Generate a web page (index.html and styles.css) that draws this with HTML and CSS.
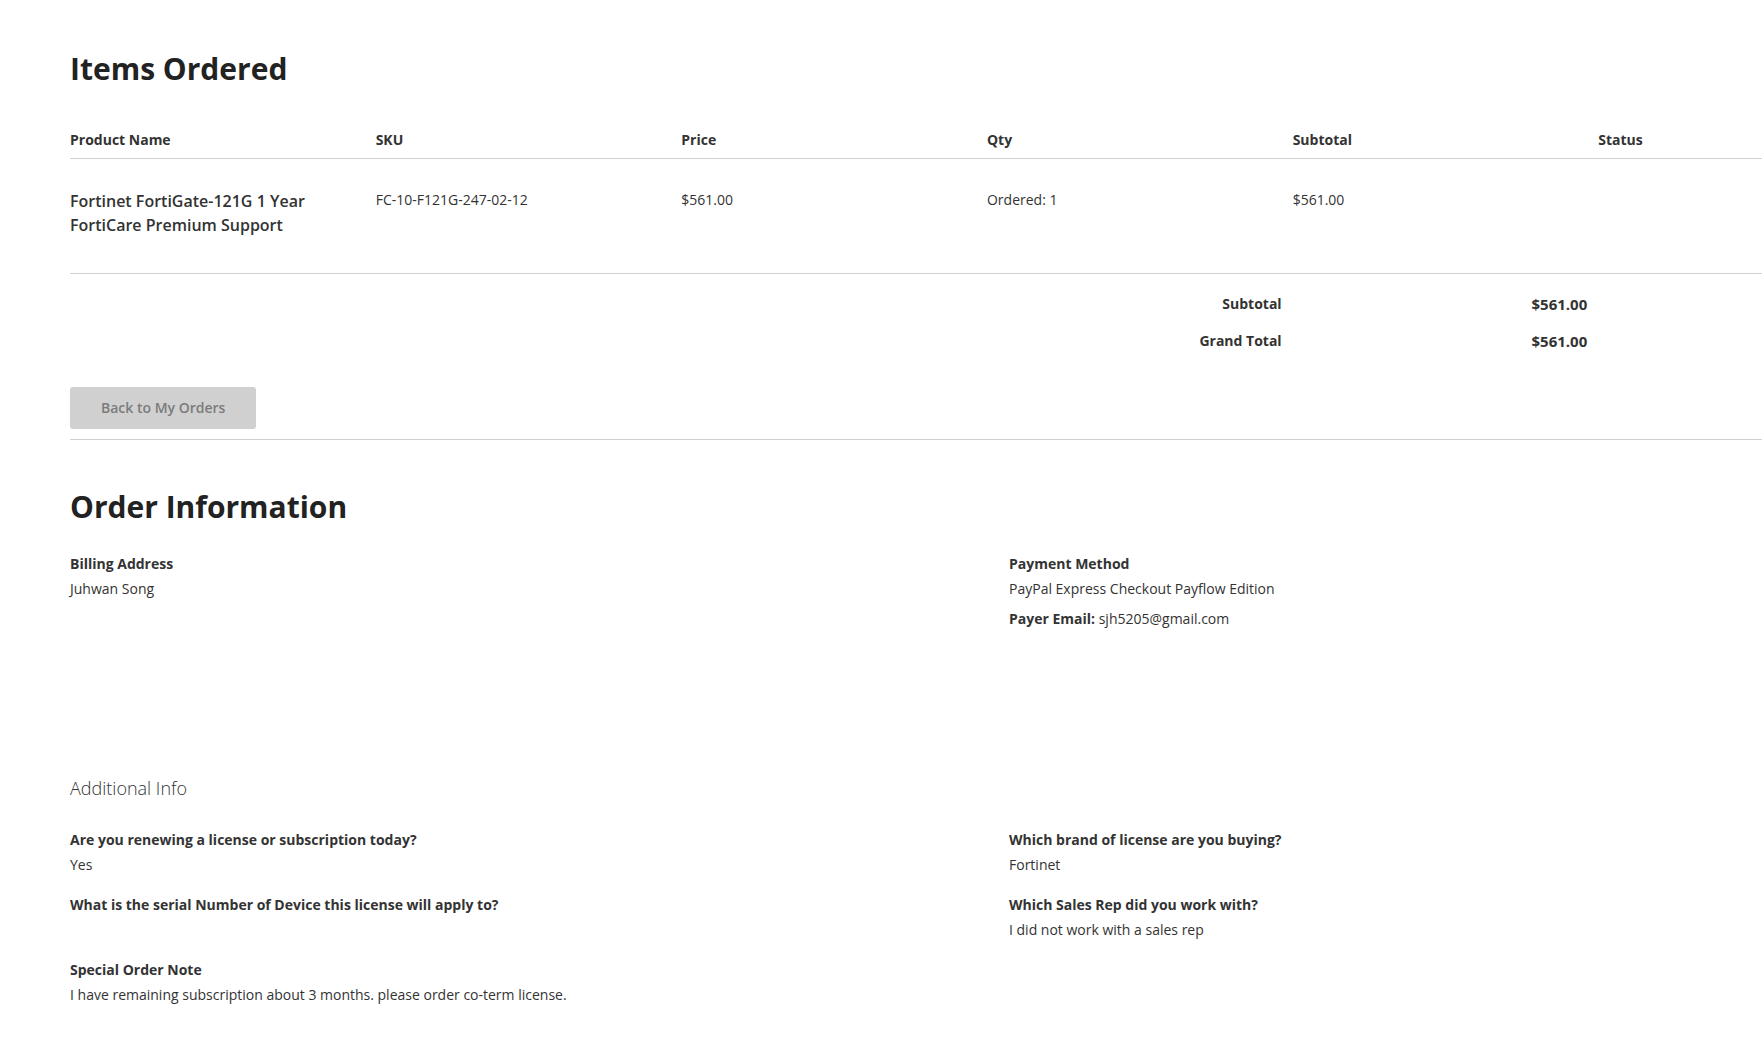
FILE: index.html
```html
<!doctype html>
<html>
	<head>
		<meta charset="utf-8"/>
		<meta name="viewport" content="width=device-width, initial-scale=1" />
		<title>Order #000012345</title>
		<link rel="stylesheet" href="styles.css">
	</head>
	<body>
		<main class="page">
			<section class="items-ordered">
				<h2 class="block-title">Items Ordered</h2>
				<table class="items-table">
					<colgroup>
						<col class="col"><col class="col"><col class="col"><col class="col"><col class="col"><col class="col">
					</colgroup>
					<thead>
						<tr>
							<th>Product Name</th>
							<th>SKU</th>
							<th>Price</th>
							<th>Qty</th>
							<th>Subtotal</th>
							<th>Status</th>
						</tr>
					</thead>
					<tbody>
						<tr>
							<td class="product-name">Fortinet FortiGate-121G 1 Year FortiCare Premium Support</td>
							<td>FC-10-F121G-247-02-12</td>
							<td>$561.00</td>
							<td>Ordered: 1</td>
							<td>$561.00</td>
							<td></td>
						</tr>
					</tbody>
					<tfoot>
						<tr class="first">
							<th colspan="4" class="mark">Subtotal</th>
							<td class="amount">$561.00</td>
							<td></td>
						</tr>
						<tr>
							<th colspan="4" class="mark">Grand Total</th>
							<td class="amount">$561.00</td>
							<td></td>
						</tr>
					</tfoot>
				</table>

				<div class="actions">
					<a class="back-btn" href="#">Back to My Orders</a>
				</div>
			</section>

			<section class="order-info">
				<h2 class="block-title">Order Information</h2>
				<div class="two-col">
					<div class="box">
						<div class="box-title">Billing Address</div>
						<div class="box-value">Juhwan Song</div>
					</div>
					<div class="box">
						<div class="box-title">Payment Method</div>
						<div class="box-value">PayPal Express Checkout Payflow Edition</div>
						<div class="box-value extra"><strong>Payer Email:</strong> sjh5205@gmail.com</div>
					</div>
				</div>

				<h3 class="sub-title">Additional Info</h3>
				<div class="two-col questions">
					<div class="box">
						<div class="box-title">Are you renewing a license or subscription today?</div>
						<div class="box-value">Yes</div>
					</div>
					<div class="box">
						<div class="box-title">Which brand of license are you buying?</div>
						<div class="box-value">Fortinet</div>
					</div>
					<div class="box">
						<div class="box-title">What is the serial Number of Device this license will apply to?</div>
						<div class="box-value"></div>
					</div>
					<div class="box">
						<div class="box-title">Which Sales Rep did you work with?</div>
						<div class="box-value">I did not work with a sales rep</div>
					</div>
					<div class="box">
						<div class="box-title">Special Order Note</div>
						<div class="box-value">I have remaining subscription about 3 months. please order co-term license.</div>
					</div>
				</div>
			</section>
		</main>
	</body>
</html>
```

FILE: styles.css
```css
html, body {
	overflow-x: hidden;
}

body {
	margin: 0;
	background: #fff;
	color: #333;
	font-family: "Open Sans", "Liberation Sans", sans-serif;
	font-size: 14px;
	line-height: 20px;
}

.page {
	width: 1834px;
	padding-left: 70px;
}

.block-title {
	margin: 0;
	font-size: 30px;
	line-height: 38px;
	font-weight: 700;
	color: #222;
}

.items-ordered .block-title {
	margin-top: 50px;
	margin-bottom: 30px;
}

/* items table */
.items-table {
	width: 1834px;
	table-layout: fixed;
	border-collapse: collapse;
}

.items-table .col {
	width: 305.6px;
}

.items-table th,
.items-table td {
	padding: 0 11px 0 0;
	text-align: left;
	vertical-align: top;
}

.items-table thead th {
	padding-top: 12px;
	padding-bottom: 8px;
	font-weight: 700;
	border-bottom: 1px solid #d1d1d1;
}

.items-table tbody td {
	padding-top: 30.5px;
	padding-bottom: 35.5px;
	border-bottom: 1px solid #d1d1d1;
}

.items-table tbody .product-name {
	font-size: 16px;
	line-height: 24px;
	font-weight: 600;
	padding-top: 29.5px;
	padding-bottom: 36.5px;
	padding-right: 30px;
}

.items-table tfoot th,
.items-table tfoot td {
	padding-top: 9px;
	padding-bottom: 8px;
}

.items-table tfoot .first th,
.items-table tfoot .first td {
	padding-top: 20px;
}

.items-table tfoot .mark {
	text-align: right;
	font-weight: 700;
}

.items-table tfoot .amount {
	text-align: right;
	font-size: 15px;
	font-weight: 700;
}

/* back button */
.actions {
	margin-top: 28px;
	padding-bottom: 10px;
	border-bottom: 1px solid #d1d1d1;
}

.back-btn {
	display: inline-block;
	padding: 11px 31px 11px 31px;
	background: #d0d0d0;
	border-radius: 3px;
	color: #7b7b7b;
	font-weight: 600;
	text-decoration: none;
}

/* order information */
.order-info .block-title {
	margin-top: 48px;
	margin-bottom: 28px;
}

.two-col {
	display: grid;
	grid-template-columns: 939px 1fr;
}

.box-title {
	font-weight: 700;
	margin-bottom: 5px;
}

.box-value {
	min-height: 20px;
}

.box-value.extra {
	margin-top: 10px;
}

.sub-title {
	margin: 147px 0 30px;
	font-size: 18px;
	line-height: 24px;
	font-weight: 300;
}

.questions {
	row-gap: 20px;
}
```
